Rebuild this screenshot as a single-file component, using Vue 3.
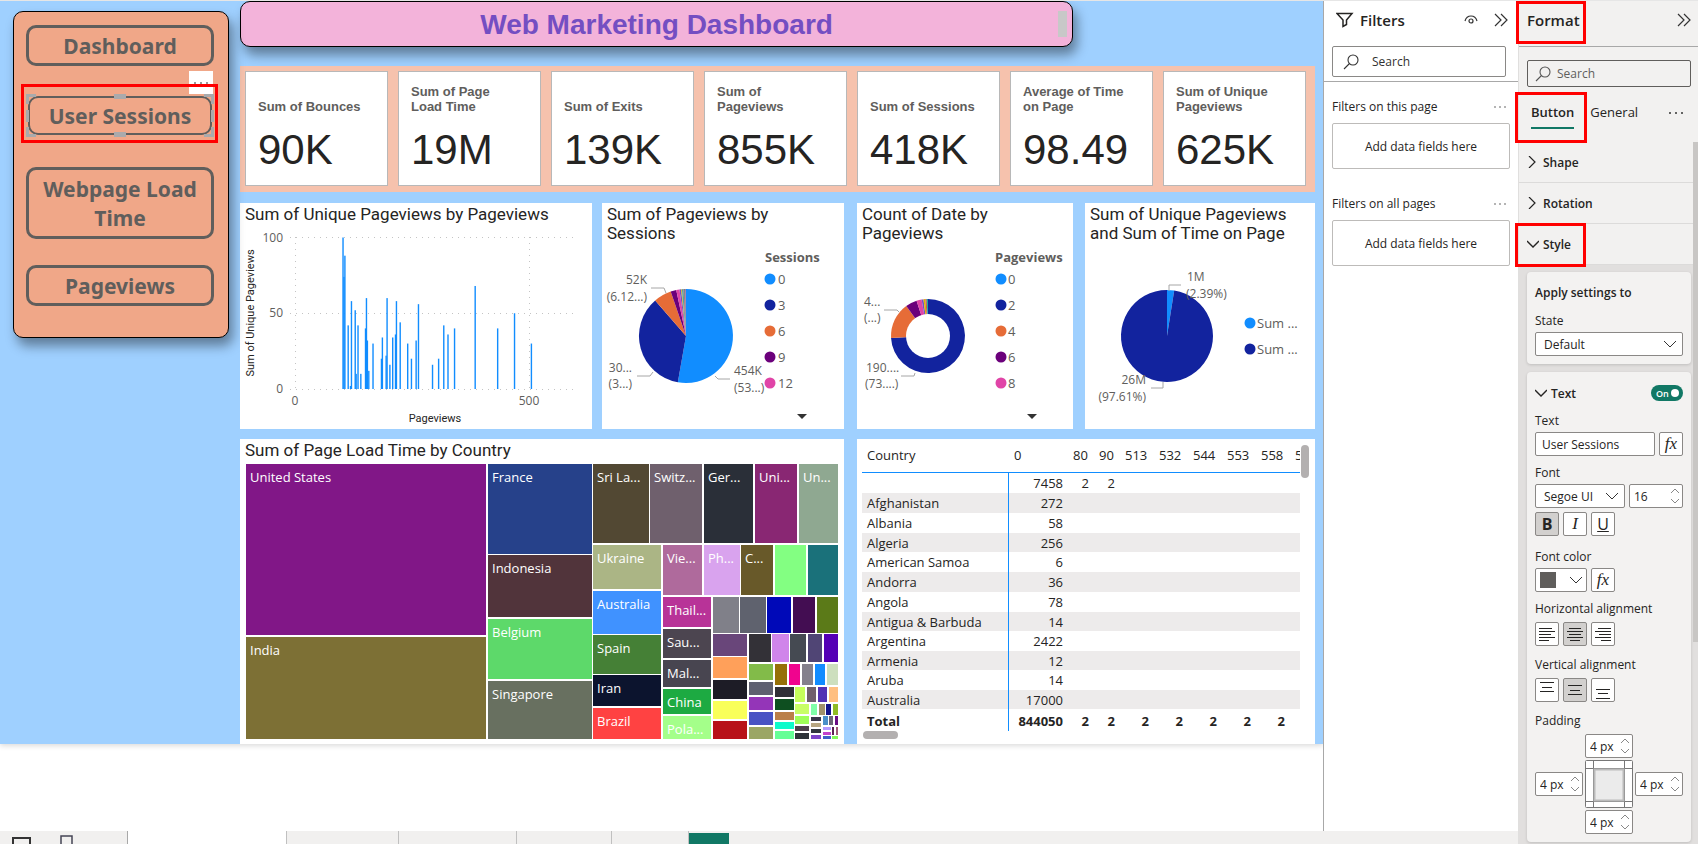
<script setup>
import { ref } from 'vue'

const kpis = [
  { label: 'Sum of Bounces', value: '90K' },
  { label: 'Sum of Page Load Time', value: '19M' },
  { label: 'Sum of Exits', value: '139K' },
  { label: 'Sum of Pageviews', value: '855K' },
  { label: 'Sum of Sessions', value: '418K' },
  { label: 'Average of Time on Page', value: '98.49' },
  { label: 'Sum of Unique Pageviews', value: '625K' },
]

// [pageviews, unique pageviews]
const bars = [
  [101, 100], [103, 74], [105, 88], [112, 42], [117, 2], [119, 58], [127, 52], [129, 10], [133, 42],
  [139, 10], [149, 40], [151, 60], [153, 32], [156, 12], [165, 30], [183, 20], [185, 34], [193, 22],
  [195, 60], [201, 16], [207, 34], [213, 36], [215, 58], [223, 44], [239, 30], [247, 20], [257, 32],
  [262, 56], [292, 16], [305, 20], [316, 42], [325, 36], [339, 40], [383, 68], [431, 40], [467, 50],
  [503, 30],
]
const barX = (v) => 55 + v * 0.4686
const barH = (v) => v * 1.515

function slice(cx, cy, r, from, to) {
  const point = (deg) => {
    const a = ((deg - 90) * Math.PI) / 180
    return `${(cx + r * Math.cos(a)).toFixed(2)} ${(cy + r * Math.sin(a)).toFixed(2)}`
  }
  return `M${cx} ${cy} L${point(from)} A${r} ${r} 0 ${to - from > 180 ? 1 : 0} 1 ${point(to)} Z`
}

const sessionSlices = [
  [0, 190, '#118dff'], [190, 319, '#12239e'], [319, 341, '#e66c37'], [341, 348, '#6b007b'],
  [348, 352, '#e044a7'], [352, 354, '#744ec2'], [354, 355, '#d9b300'], [355, 357, '#4aa3a3'],
  [357, 358, '#d64550'], [358, 359, '#197278'], [359, 360, '#a66999'],
].map(([a, b, color]) => ({ d: slice(84, 92, 47, a, b), color }))

const dateSlices = [
  [0, 267, '#12239e'], [267, 324, '#e66c37'], [324, 342, '#6b007b'], [342, 350, '#e044a7'],
  [350, 353, '#744ec2'], [353, 356, '#d9b300'], [356, 358, '#d64550'], [358, 360, '#1aab9f'],
].map(([a, b, color]) => ({ d: slice(71, 92, 37, a, b), color }))

const timeSlices = [
  [0, 9, '#118dff'], [9, 360, '#12239e'],
].map(([a, b, color]) => ({ d: slice(82, 92, 46, a, b), color }))

const palette = ['#118dff', '#12239e', '#e66c37', '#6b007b', '#e044a7']
const sessionLegend = ['0', '3', '6', '9', '12']
const dateLegend = ['0', '2', '4', '6', '8']

// [left, top, right, bottom, fill, label]
const tiles = [
  [6, 1, 246, 172, '#811787', 'United States'],
  [6, 174, 246, 276, '#7d7035', 'India'],
  [248, 1, 352, 91, '#26418a', 'France'],
  [248, 92, 352, 154, '#51343b', 'Indonesia'],
  [248, 156, 352, 216, '#5dd96a', 'Belgium'],
  [248, 218, 352, 276, '#687060', 'Singapore'],
  [353, 1, 409, 80, '#524833', 'Sri La...'],
  [410, 1, 462, 80, '#6f606d', 'Switz...'],
  [464, 1, 513, 80, '#2a2f38', 'Ger...'],
  [515, 1, 557, 80, '#892773', 'Uni...'],
  [559, 1, 598, 80, '#8fa891', 'Un...'],
  [353, 82, 421, 126, '#abb585', 'Ukraine'],
  [353, 128, 421, 171, '#4092ff', 'Australia'],
  [353, 172, 421, 211, '#458036', 'Spain'],
  [353, 212, 421, 243, '#0c142e', 'Iran'],
  [353, 245, 421, 276, '#ff4242', 'Brazil'],
  [423, 82, 462, 132, '#af6a9c', 'Vie...'],
  [464, 82, 500, 132, '#d9a3ee', 'Ph...'],
  [501, 82, 533, 132, '#685929', 'C...'],
  [535, 82, 566, 132, '#83ff82'],
  [568, 82, 598, 132, '#1a717a'],
  [423, 134, 471, 164, '#b83398', 'Thail...'],
  [423, 166, 471, 195, '#4c4550', 'Sau...'],
  [423, 197, 471, 224, '#484550', 'Mal...'],
  [423, 226, 471, 251, '#1daa42', 'China'],
  [423, 253, 471, 276, '#a4ff8a', 'Pola...'],
  [473, 134, 499, 170, '#808089'],
  [500, 134, 526, 170, '#5f626e'],
  [527, 134, 551, 170, '#0009b8'],
  [553, 134, 575, 170, '#430d52'],
  [577, 134, 598, 170, '#5b7a18'],
  [473, 171, 507, 193, '#69467a'],
  [473, 194, 507, 215, '#ffa05a'],
  [473, 217, 507, 236, '#1d1c26'],
  [473, 238, 507, 256, '#f9ff5a'],
  [473, 258, 507, 276, '#b81219'],
  [509, 171, 531, 199, '#333137'],
  [532, 171, 549, 199, '#d085ea'],
  [550, 171, 566, 199, '#454a52'],
  [568, 171, 582, 199, '#504575'],
  [584, 171, 598, 199, '#5400b5'],
  [509, 201, 533, 217, '#82bb49'],
  [509, 219, 533, 232, '#5f6070'],
  [509, 234, 533, 247, '#9435b8'],
  [509, 249, 533, 262, '#4853c4'],
  [509, 264, 533, 276, '#9ba665'],
  [535, 201, 547, 222, '#967008'],
  [549, 201, 560, 222, '#f0048e'],
  [562, 201, 573, 222, '#84808c'],
  [575, 201, 585, 222, '#128cff'],
  [587, 201, 598, 222, '#cddfbe'],
  [535, 224, 554, 234, '#302f37'],
  [535, 236, 554, 247, '#0e4f20'],
  [535, 249, 554, 257, '#bb7f48'],
  [535, 259, 554, 266, '#0dfbcb'],
  [535, 268, 554, 276, '#66ff96'],
  [555, 224, 565, 239, '#c6ff5c'],
  [567, 224, 576, 239, '#70606c'],
  [578, 224, 587, 239, '#5231b4'],
  [589, 224, 598, 239, '#ffbf80'],
  [555, 241, 569, 251, '#c8ff66'],
  [555, 253, 569, 261, '#9fff58'],
  [555, 263, 569, 268, '#4d414c'],
  [555, 270, 569, 276, '#2d3238'],
  [571, 241, 577, 252, '#80ffa8'],
  [579, 241, 585, 252, '#a1916a'],
  [586, 241, 591, 252, '#14148b'],
  [593, 241, 598, 252, '#90bb24'],
  [571, 254, 581, 258, '#383748'],
  [571, 260, 581, 264, '#b8a782'],
  [571, 266, 581, 270, '#31373f'],
  [571, 272, 581, 276, '#7c44c8'],
  [583, 253, 588, 262, '#4a8fc8'],
  [589, 253, 593, 262, '#6c6478'],
  [595, 253, 598, 262, '#6a0c84'],
  [583, 264, 591, 267, '#b49aff'],
  [583, 269, 591, 272, '#c442cc'],
  [583, 273, 591, 276, '#4060c8'],
  [592, 264, 594, 272, '#5b2056'],
  [596, 264, 598, 272, '#a05878'],
  [592, 273, 598, 276, '#82f85a'],
]

const columns = ['0', '80', '90', '513', '532', '544', '553', '558', '5']
const rows = [
  ['', '7458', '2', '2'],
  ['Afghanistan', '272'],
  ['Albania', '58'],
  ['Algeria', '256'],
  ['American Samoa', '6'],
  ['Andorra', '36'],
  ['Angola', '78'],
  ['Antigua & Barbuda', '14'],
  ['Argentina', '2422'],
  ['Armenia', '12'],
  ['Aruba', '14'],
  ['Australia', '17000'],
]
const totals = ['844050', '2', '2', '2', '2', '2', '2', '2', '']

const filterSearch = ref('')
const formatSearch = ref('')
const buttonText = ref('User Sessions')
const textOn = ref(true)
const fontSize = ref('16')
const padding = ref({ top: '4 px', left: '4 px', right: '4 px', bottom: '4 px' })
</script>

<template>
  <div class="app">
    <main class="workspace">
      <section class="report">
        <nav class="nav">
          <button type="button" class="nav-btn">Dashboard</button>
          <div class="selected">
            <button type="button" class="nav-btn thin">User Sessions</button>
            <i class="handle tl"></i><i class="handle tr"></i><i class="handle bl"></i><i class="handle br"></i>
            <i class="grip top"></i><i class="grip bottom"></i><i class="grip left"></i><i class="grip right"></i>
            <button type="button" class="more" aria-label="More options">
              <svg width="16" height="4" viewBox="0 0 16 4" fill="#777"><circle cx="2" cy="2" r="1" /><circle cx="8" cy="2" r="1" /><circle cx="14" cy="2" r="1" /></svg>
            </button>
            <i class="mark"></i>
          </div>
          <button type="button" class="nav-btn tall">Webpage Load Time</button>
          <button type="button" class="nav-btn last">Pageviews</button>
        </nav>

        <div class="content">
          <header class="banner">
            <h1>Web Marketing Dashboard</h1>
            <i class="banner-thumb"></i>
          </header>

          <ul class="kpis">
            <li v-for="k in kpis" :key="k.label" class="kpi">
              <span class="kpi-label">{{ k.label }}</span>
              <span class="kpi-value">{{ k.value }}</span>
            </li>
          </ul>

          <div class="visuals">
            <div class="pair left">
              <article class="card">
                <h2 class="roomy">Sum of Unique Pageviews by Pageviews</h2>
                <svg class="chart" viewBox="0 0 352 200">
                  <g stroke="#c4c4c4" stroke-dasharray="1 5" fill="none">
                    <path d="M50 8.5H334M50 84.5H334M50 160.5H334M55.5 8V160M289.5 8V160" />
                  </g>
                  <rect v-for="(b, i) in bars" :key="i" :x="barX(b[0])" :y="160 - barH(b[1])" width="1.4" :height="barH(b[1])" fill="#118dff" />
                  <g class="axis">
                    <text x="43" y="13" text-anchor="end">100</text>
                    <text x="43" y="88" text-anchor="end">50</text>
                    <text x="43" y="164" text-anchor="end">0</text>
                    <text x="55" y="176" text-anchor="middle">0</text>
                    <text x="289" y="176" text-anchor="middle">500</text>
                  </g>
                  <text class="axis-title" x="195" y="193" text-anchor="middle">Pageviews</text>
                  <text class="axis-title" transform="translate(14 84) rotate(-90)" text-anchor="middle">Sum of Unique Pageviews</text>
                </svg>
              </article>

              <article class="card">
                <h2>Sum of Pageviews by Sessions</h2>
                <svg class="chart" viewBox="0 0 242 185">
                  <path v-for="(s, i) in sessionSlices" :key="i" :d="s.d" :fill="s.color" />
                  <path class="leader" d="M49 44H62L64 49M35 132H48L51 128M113 132L116 135H128" />
                  <g class="detail">
                    <text x="45" y="40" text-anchor="end">52K</text>
                    <text x="45" y="57" text-anchor="end">(6.12...)</text>
                    <text x="30" y="128" text-anchor="end">30...</text>
                    <text x="30" y="144" text-anchor="end">(3...)</text>
                    <text x="132" y="131">454K</text>
                    <text x="132" y="148">(53...)</text>
                  </g>
                  <text class="legend-title" x="163" y="18">Sessions</text>
                  <g v-for="(l, i) in sessionLegend" :key="l">
                    <circle cx="168" :cy="35 + i * 26" r="5.5" :fill="palette[i]" />
                    <text class="legend" x="176" :y="40 + i * 26">{{ l }}</text>
                  </g>
                  <path d="M195 170H205L200 175Z" fill="#333" />
                </svg>
              </article>
            </div>

            <div class="pair right">
              <article class="card">
                <h2>Count of Date by Pageviews</h2>
                <svg class="chart" viewBox="0 0 216 185">
                  <path v-for="(s, i) in dateSlices" :key="i" :d="s.d" :fill="s.color" />
                  <circle cx="71" cy="92" r="22" fill="#fff" />
                  <path class="leader" d="M27 66H40L42 68M44 132H57L58 129" />
                  <g class="detail">
                    <text x="7" y="62">4...</text>
                    <text x="7" y="78">(...)</text>
                    <text x="9" y="128">190....</text>
                    <text x="8" y="144">(73....)</text>
                  </g>
                  <text class="legend-title" x="138" y="18">Pageviews</text>
                  <g v-for="(l, i) in dateLegend" :key="l">
                    <circle cx="144" :cy="35 + i * 26" r="5.5" :fill="palette[i]" />
                    <text class="legend" x="151" :y="40 + i * 26">{{ l }}</text>
                  </g>
                  <path d="M170 170H180L175 175Z" fill="#333" />
                </svg>
              </article>

              <article class="card">
                <h2>Sum of Unique Pageviews and Sum of Time on Page</h2>
                <svg class="chart" viewBox="0 0 230 185">
                  <path v-for="(s, i) in timeSlices" :key="i" :d="s.d" :fill="s.color" />
                  <path class="leader" d="M84 47V41H96M66 144H78V138" />
                  <g class="detail">
                    <text x="102" y="37">1M</text>
                    <text x="101" y="54">(2.39%)</text>
                    <text x="61" y="140" text-anchor="end">26M</text>
                    <text x="61" y="157" text-anchor="end">(97.61%)</text>
                  </g>
                  <circle cx="165" cy="79" r="5.5" fill="#118dff" />
                  <text class="legend" x="172" y="84">Sum ...</text>
                  <circle cx="165" cy="105" r="5.5" fill="#12239e" />
                  <text class="legend" x="172" y="110">Sum ...</text>
                </svg>
              </article>
            </div>

            <article class="card">
              <h2>Sum of Page Load Time by Country</h2>
              <svg class="chart" viewBox="0 0 604 281">
                <g v-for="(t, i) in tiles" :key="i">
                  <rect :x="t[0]" :y="t[1]" :width="t[2] - t[0]" :height="t[3] - t[1]" :fill="t[4]" />
                  <text v-if="t[5]" class="tile" :x="t[0] + 4" :y="t[1] + 18">{{ t[5] }}</text>
                </g>
              </svg>
            </article>

            <article class="card matrix">
              <div class="matrix-view">
                <table>
                  <colgroup>
                    <col class="c-name" /><col class="c-first" /><col class="c-small" /><col class="c-small" />
                    <col v-for="n in 6" :key="n" class="c-mid" />
                  </colgroup>
                  <thead>
                    <tr><th>Country</th><th v-for="c in columns" :key="c">{{ c }}</th></tr>
                  </thead>
                  <tbody>
                    <tr v-for="r in rows" :key="r[0]">
                      <td v-for="(c, i) in 10" :key="i">{{ r[i] }}</td>
                    </tr>
                  </tbody>
                  <tfoot>
                    <tr><td>Total</td><td v-for="(t, i) in totals" :key="i">{{ t }}</td></tr>
                  </tfoot>
                </table>
              </div>
              <i class="thumb-v"></i>
              <i class="thumb-h"></i>
            </article>
          </div>
        </div>
      </section>

      <footer class="pages">
        <div class="devices">
          <button type="button" aria-label="Desktop layout"><svg width="20" height="12" viewBox="0 0 20 12" fill="none" stroke="#333" stroke-width="2"><path d="M1 12V4H18V12" /></svg></button>
          <button type="button" aria-label="Mobile layout"><svg width="13" height="14" viewBox="0 0 13 14" fill="none" stroke="#445" stroke-width="1.5"><path d="M1 14V2H12V14" /></svg></button>
        </div>
        <div class="tab t1 current"></div>
        <div class="tab t2"></div>
        <div class="tab t3"></div>
        <div class="tab t4"></div>
        <div class="tab t5"></div>
        <button type="button" class="add" aria-label="New page"></button>
      </footer>
    </main>

    <aside class="filters">
      <header class="filters-head">
        <svg width="18" height="16" viewBox="0 0 18 16" fill="none" stroke="#252423" stroke-width="1.5"><path d="M1 1.5H16L10.5 8V12.5L7 14.5V8Z" /></svg>
        <h3>Filters</h3>
        <svg class="eye" width="14" height="10" viewBox="0 0 14 10" fill="none" stroke="#333" stroke-width="1.2"><path d="M1 6C2 2.500 4.500 1 7 1S12 2.500 13 6" /><circle cx="7" cy="6" r="2" /></svg>
        <svg width="14" height="14" viewBox="0 0 14 14" fill="none" stroke="#333" stroke-width="1.2"><path d="M1 1L7 7L1 13M7 1L13 7L7 13" /></svg>
      </header>
      <div class="filters-search">
        <label class="search">
          <svg width="16" height="16" viewBox="0 0 16 16" fill="none" stroke="#333" stroke-width="1.100"><circle cx="10" cy="6" r="5" /><path d="M6.500 9.500L1 15" /></svg>
          <input v-model="filterSearch" type="text" placeholder="Search" aria-label="Search filters" />
        </label>
      </div>
      <section class="filter-group">
        <div class="filter-title"><span>Filters on this page</span><svg width="12" height="4" viewBox="0 0 12 4" fill="#555"><circle cx="1" cy="2" r="0.800" /><circle cx="6" cy="2" r="0.800" /><circle cx="11" cy="2" r="0.800" /></svg></div>
        <div class="drop">Add data fields here</div>
      </section>
      <section class="filter-group">
        <div class="filter-title"><span>Filters on all pages</span><svg width="12" height="4" viewBox="0 0 12 4" fill="#555"><circle cx="1" cy="2" r="0.800" /><circle cx="6" cy="2" r="0.800" /><circle cx="11" cy="2" r="0.800" /></svg></div>
        <div class="drop">Add data fields here</div>
      </section>
    </aside>

    <aside class="format">
      <header class="format-head">
        <h3>Format</h3>
        <i class="mark"></i>
        <svg width="14" height="14" viewBox="0 0 14 14" fill="none" stroke="#333" stroke-width="1.2"><path d="M1 1L7 7L1 13M7 1L13 7L7 13" /></svg>
      </header>
      <label class="search">
        <svg width="16" height="16" viewBox="0 0 16 16" fill="none" stroke="#555" stroke-width="1.100"><circle cx="10" cy="6" r="5" /><path d="M6.500 9.500L1 15" /></svg>
        <input v-model="formatSearch" type="text" placeholder="Search" aria-label="Search format settings" />
      </label>
      <div class="tabs">
        <button type="button" class="active">Button</button>
        <button type="button">General</button>
        <svg width="16" height="4" viewBox="0 0 16 4" fill="#333"><circle cx="2" cy="2" r="1" /><circle cx="8" cy="2" r="1" /><circle cx="14" cy="2" r="1" /></svg>
        <i class="mark"></i>
      </div>
      <button type="button" class="group"><svg width="12" height="12" viewBox="0 0 12 12" fill="none" stroke="#252423" stroke-width="1.2"><path d="M2 0L8 6L2 12" /></svg>Shape</button>
      <button type="button" class="group"><svg width="12" height="12" viewBox="0 0 12 12" fill="none" stroke="#252423" stroke-width="1.2"><path d="M2 0L8 6L2 12" /></svg>Rotation</button>
      <button type="button" class="group open"><svg width="12" height="12" viewBox="0 0 12 12" fill="none" stroke="#252423" stroke-width="1.4"><path d="M0 3L6 9L12 3" /></svg>Style<i class="mark"></i></button>

      <div class="settings">
        <section class="panel">
          <h4>Apply settings to</h4>
          <label for="state">State</label>
          <div class="select">
            <select id="state"><option>Default</option></select>
            <svg width="12" height="8" viewBox="0 0 12 8" fill="none" stroke="#333"><path d="M0 1L6 7L12 1" /></svg>
          </div>
        </section>

        <section class="panel text-panel">
          <div class="panel-head">
            <svg width="12" height="12" viewBox="0 0 12 12" fill="none" stroke="#252423" stroke-width="1.4"><path d="M0 3L6 9L12 3" /></svg>
            <span>Text</span>
            <label class="toggle"><input v-model="textOn" type="checkbox" aria-label="Text" /><span>On</span><i></i></label>
          </div>
          <label for="btn-text">Text</label>
          <div class="row">
            <input id="btn-text" v-model="buttonText" class="box grow" type="text" />
            <button type="button" class="tool fx">fx</button>
          </div>
          <label for="font">Font</label>
          <div class="row">
            <div class="select grow">
              <select id="font"><option>Segoe UI</option></select>
              <svg width="12" height="8" viewBox="0 0 12 8" fill="none" stroke="#333"><path d="M0 1L6 7L12 1" /></svg>
            </div>
            <div class="spin wide">
              <input v-model="fontSize" type="text" aria-label="Font size" />
              <svg width="10" height="16" viewBox="0 0 10 16" fill="none" stroke="#888"><path d="M1 5L5 1L9 5M1 11L5 15L9 11" /></svg>
            </div>
          </div>
          <div class="row tools">
            <button type="button" class="tool on bold">B</button>
            <button type="button" class="tool italic">I</button>
            <button type="button" class="tool under">U</button>
          </div>
          <span class="caption">Font color</span>
          <div class="row">
            <button type="button" class="swatch" aria-label="Font color"><i></i><svg width="12" height="8" viewBox="0 0 12 8" fill="none" stroke="#333"><path d="M0 1L6 7L12 1" /></svg></button>
            <button type="button" class="tool fx">fx</button>
          </div>
          <span class="caption">Horizontal alignment</span>
          <div class="row low">
            <button type="button" class="tool" aria-label="Left"><svg width="18" height="14" viewBox="0 0 18 14" stroke="#252423"><path d="M1 1.500H14M1 4.500H17M1 7.500H13M1 10.500H17M1 13.500H11" /></svg></button>
            <button type="button" class="tool on" aria-label="Center"><svg width="18" height="14" viewBox="0 0 18 14" stroke="#252423"><path d="M3 1.500H15M1 4.500H17M3 7.500H15M1 10.500H17M4 13.500H14" /></svg></button>
            <button type="button" class="tool" aria-label="Right"><svg width="18" height="14" viewBox="0 0 18 14" stroke="#252423"><path d="M4 1.500H17M1 4.500H17M5 7.500H17M1 10.500H17M7 13.500H17" /></svg></button>
          </div>
          <span class="caption far">Vertical alignment</span>
          <div class="row low">
            <button type="button" class="tool" aria-label="Top"><svg width="18" height="20" viewBox="0 0 18 20" stroke="#252423"><path d="M2 2.500H16M4 7.500H14M2 11.500H16" /></svg></button>
            <button type="button" class="tool on" aria-label="Middle"><svg width="18" height="20" viewBox="0 0 18 20" stroke="#252423"><path d="M2 5.500H16M4 10.500H14M2 14.500H16" /></svg></button>
            <button type="button" class="tool" aria-label="Bottom"><svg width="18" height="20" viewBox="0 0 18 20" stroke="#252423"><path d="M2 9.500H16M4 13.500H14M2 18.500H16" /></svg></button>
          </div>
          <span class="caption far">Padding</span>
          <div class="pads">
            <div v-for="side in ['top', 'left', 'right', 'bottom']" :key="side" class="spin" :class="side">
              <input v-model="padding[side]" type="text" :aria-label="'Padding ' + side" />
              <svg width="10" height="16" viewBox="0 0 10 16" fill="none" stroke="#888"><path d="M1 5L5 1L9 5M1 11L5 15L9 11" /></svg>
            </div>
            <svg class="frame" viewBox="0 0 48 48" fill="#fff" stroke="#777"><rect x="0.5" y="0.5" width="47" height="47" rx="1" /><path d="M8.500 0V48M39.500 0V48M0 8.500H48M0 41.500H48" /><rect x="9.500" y="9.500" width="29" height="31" fill="#ebebeb" stroke="#bbb" stroke-width="2" /></svg>
          </div>
        </section>
      </div>
      <i class="scroll"></i>
    </aside>
  </div>
</template>

<style>
body {
  margin: 0;
  background: #fff;
}
</style>

<style scoped>
* {
  box-sizing: border-box;
}
.app {
  display: grid;
  grid-template-columns: minmax(0, 1fr) 195px 180px;
  height: 100vh;
  overflow: hidden;
  border-top: 1px solid #e6e6e6;
  font-family: 'Open Sans', 'Noto Sans', sans-serif;
  font-size: 12px;
  color: #252423;
}
button,
input,
select {
  font: inherit;
  color: inherit;
  margin: 0;
  padding: 0;
  border: 0;
  background: none;
  border-radius: 0;
}
h1,
h2,
h3,
h4,
ul {
  margin: 0;
  padding: 0;
}
svg {
  display: block;
  flex: none;
}
.mark {
  position: absolute;
  border: 3px solid #f00;
  pointer-events: none;
}
.workspace {
  display: flex;
  flex-direction: column;
  min-width: 0;
}
.report {
  display: flex;
  align-items: flex-start;
  gap: 11px;
  padding: 0 8px 0 13px;
  background: #9fd0ff;
  box-shadow: 0 2px 5px #ddd;
}
.nav {
  position: relative;
  z-index: 1;
  display: flex;
  flex-direction: column;
  flex: none;
  width: 216px;
  margin-top: 10px;
  padding: 13px 14px 31px 12px;
  border: 1px solid #000;
  border-radius: 10px;
  background: #f0a788;
  box-shadow: 4px 8px 12px rgba(0, 0, 0, 0.4);
}
.nav-btn {
  height: 41px;
  padding-top: 2px;
  border: 3px solid #605e5c;
  border-radius: 10px;
  color: #605e5c;
  font-size: 21px;
  font-weight: 700;
  line-height: 29px;
  font-family: 'Noto Sans', 'Open Sans', sans-serif;
}
.nav-btn.thin {
  width: 100%;
  height: 100%;
  border-width: 2px;
}
.nav-btn.tall {
  height: 72px;
}
.nav-btn.last {
  margin-top: 26px;
}
.selected {
  position: relative;
  height: 43px;
  margin: 28px 0 30px;
  padding: 2px;
}
.handle {
  position: absolute;
  width: 10px;
  height: 10px;
  border: 0 solid #a9aaac;
}
.tl {
  top: 0;
  left: 0;
  border-width: 3px 0 0 3px;
}
.tr {
  top: 0;
  right: 0;
  border-width: 3px 3px 0 0;
}
.bl {
  bottom: 0;
  left: 0;
  border-width: 0 0 3px 3px;
}
.br {
  bottom: 0;
  right: 0;
  border-width: 0 3px 3px 0;
}
.grip {
  position: absolute;
  background: #a9aaac;
}
.grip.top,
.grip.bottom {
  left: 50%;
  width: 12px;
  height: 5px;
  margin-left: -6px;
}
.grip.top {
  top: 0;
}
.grip.bottom {
  bottom: 0;
}
.grip.left,
.grip.right {
  top: 50%;
  width: 3px;
  height: 12px;
  margin-top: -6px;
}
.grip.left {
  left: 0;
}
.grip.right {
  right: 0;
}
.more {
  position: absolute;
  right: 1px;
  bottom: 100%;
  display: grid;
  place-items: center;
  width: 24px;
  height: 23px;
  background: #fff;
}
.selected .mark {
  inset: -10px -4px -6px -5px;
}
.content {
  flex: 1;
  min-width: 0;
}
.banner {
  position: relative;
  display: grid;
  place-items: center;
  width: 77.500%;
  height: 46px;
  border: 1px solid #000;
  border-radius: 10px;
  background: #f3b3da;
  box-shadow: 4px 8px 12px rgba(0, 0, 0, 0.4);
}
.banner h1 {
  padding-top: 2px;
  font: 700 28px/42px 'Liberation Sans', sans-serif;
  color: #744ec2;
}
.banner-thumb {
  position: absolute;
  top: 9px;
  right: 5px;
  width: 9px;
  height: 26px;
  background: #c8c8c8;
}
.kpis {
  position: relative;
  display: grid;
  grid-template-columns: repeat(7, 1fr);
  gap: 10px;
  margin-top: 19px;
  padding: 5px 9px 6px 5px;
  background: #f6c2ad;
  list-style: none;
  font-family: 'Liberation Sans', sans-serif;
}
.kpi {
  display: flex;
  flex-direction: column;
  justify-content: flex-end;
  height: 115px;
  padding: 0 16px 11px 12px;
  border: 1px solid #b8b8b8;
  background: #fff;
}
.kpi-label {
  color: #605e5c;
  font-size: 13px;
  font-weight: 700;
  line-height: 15px;
}
.kpi-value {
  margin-top: 12px;
  font-size: 42px;
  line-height: 48px;
}
.visuals {
  display: grid;
  grid-template-columns: 604fr 458fr;
  gap: 10px 13px;
  margin-top: 11px;
}
.pair {
  display: grid;
}
.pair.left {
  grid-template-columns: 352fr 242fr;
  gap: 10px;
}
.pair.right {
  grid-template-columns: 216fr 230fr;
  gap: 12px;
}
.card {
  position: relative;
  min-width: 0;
  background: #fff;
}
.card h2 {
  padding: 2px 4px 1px 5px;
  font: 400 17px/19px Roboto, sans-serif;
  min-height: 24px;
}
.card h2.roomy {
  min-height: 26px;
}
.chart {
  width: 100%;
  height: auto;
}
.axis {
  font-size: 12px;
  fill: #605e5c;
}
.axis-title {
  font: 11px Roboto, sans-serif;
  fill: #252423;
}
.detail {
  font-size: 12px;
  fill: #605e5c;
}
.leader {
  fill: none;
  stroke: #a6a6a6;
}
.legend-title {
  font-size: 13px;
  font-weight: 700;
  fill: #605e5c;
}
.legend {
  font-size: 13px;
  fill: #605e5c;
}
.tile {
  font-size: 13px;
  fill: #fff;
}
.matrix-view {
  margin: 0 15px 0 5px;
  overflow: hidden;
}
table {
  width: 437px;
  table-layout: fixed;
  border-collapse: separate;
  border-spacing: 0;
  font-size: 13px;
  line-height: 16px;
}
.c-name {
  width: 147px;
}
.c-first {
  width: 59px;
}
.c-small {
  width: 26px;
}
.c-mid {
  width: 34px;
}
th,
td {
  height: 19px;
  padding: 0 5px;
  text-align: right;
  white-space: nowrap;
}
th {
  height: 34px;
  padding-bottom: 2px;
  font-weight: 400;
  text-align: left;
  border-bottom: 1px solid #118dff;
}
td:first-child {
  text-align: left;
  border-right: 1px solid #118dff;
}
tbody tr:nth-child(odd) td,
tbody tr:nth-child(2) td,
tbody tr:nth-child(6) td {
  height: 20px;
}
tbody tr:nth-child(even) td {
  background: #edebeb;
}
tfoot td {
  height: 22px;
  padding-top: 2px;
  font-weight: 700;
}
.thumb-v {
  position: absolute;
  top: 6px;
  right: 6px;
  width: 8px;
  height: 33px;
  border-radius: 4px;
  background: #b3b0b0;
}
.thumb-h {
  position: absolute;
  bottom: 5px;
  left: 6px;
  width: 35px;
  height: 8px;
  border-radius: 4px;
  background: #b3b0b0;
}
.pages {
  display: flex;
  height: 13px;
  margin-top: auto;
  margin-right: -195px;
  overflow: hidden;
  background: #f1f0ef;
  position: relative;
  z-index: 1;
}
.devices {
  display: flex;
  align-items: flex-start;
  gap: 28px;
  width: 128px;
  padding: 3px 0 0 12px;
  border-right: 1px solid #a8a8a8;
}
.tab {
  border-right: 1px solid #c0c0c0;
}
.tab.current {
  background: #fff;
}
.t1 {
  width: 159px;
}
.t2 {
  width: 112px;
}
.t3 {
  width: 118px;
}
.t4 {
  width: 95px;
}
.t5 {
  width: 77px;
}
.add {
  width: 40px;
  margin-top: 2px;
  background: #117865;
}
.filters {
  border-left: 1px solid #a8a8a8;
  background: #fff;
}
.filters-head {
  display: flex;
  align-items: center;
  height: 45px;
  padding: 0 10px 8px 12px;
}
h3 {
  font-size: 15px;
  font-weight: 600;
}
.filters-head h3 {
  margin-left: 6px;
}
.eye {
  margin: 0 16px 0 auto;
}
.search {
  display: flex;
  align-items: center;
  border: 1px solid #8a8886;
  border-radius: 2px;
}
.search input {
  flex: 1;
  min-width: 0;
  outline: 0;
}
.search input::placeholder {
  color: #323130;
  opacity: 1;
}
.filters-search {
  padding: 0 12px 4px 8px;
  border-bottom: 1px solid #a8a8a8;
}
.filters-search .search {
  height: 31px;
  gap: 13px;
  padding: 0 10px;
}
.filter-group {
  padding: 17px 8px 0;
}
.filter-group + .filter-group {
  padding-top: 27px;
}
.filter-title {
  display: flex;
  align-items: center;
  justify-content: space-between;
  padding-right: 4px;
  line-height: 16px;
}
.drop {
  display: grid;
  place-items: center;
  height: 46px;
  margin-top: 8px;
  border: 1px solid #bdbbb9;
  border-radius: 2px;
}
.format {
  position: relative;
  display: flex;
  flex-direction: column;
  background: #f2f1f0;
  border-left: 1px solid #e0dfde;
  z-index: 2;
}
.format-head {
  position: relative;
  display: flex;
  align-items: center;
  justify-content: space-between;
  height: 46px;
  padding: 0 7px 8px 8px;
  border-bottom: 1px solid #a8a8a8;
}
.format-head .mark {
  inset: 0 auto 2px -3px;
  width: 70px;
}
.format > .search {
  height: 27px;
  margin: 13px 7px 0 8px;
  padding-left: 7px;
  gap: 6px;
  flex: none;
  border-color: #605e5c;
}
.format > .search input::placeholder {
  color: #605e5c;
}
.tabs {
  position: relative;
  display: flex;
  align-items: center;
  height: 55px;
  padding: 0 14px 4px 12px;
}
.tabs button {
  height: 32px;
  font-size: 13px;
  margin-right: 16px;
  border-bottom: 2px solid transparent;
}
.tabs button.active {
  font-weight: 600;
  border-bottom-color: #117865;
}
.tabs svg {
  margin-left: auto;
}
.tabs .mark {
  inset: 5px auto -1px -4px;
  width: 72px;
}
.group {
  position: relative;
  display: flex;
  align-items: center;
  gap: 4px;
  height: 41px;
  padding-left: 8px;
  border-bottom: 1px solid #dcdbda;
  font-weight: 600;
}
.group .mark {
  inset: -1px auto -3px -4px;
  width: 71px;
}
.settings {
  flex: 1;
  padding: 7px 7px 0 8px;
  background: #e1dfde;
}
.panel {
  display: flex;
  flex-direction: column;
  padding: 13px 8px 8px;
  border-radius: 4px;
  background: #f3f2f1;
  box-shadow: 0 1px 3px rgba(0, 0, 0, 0.15);
}
.panel > label,
.caption,
h4 {
  font-size: 12px;
  line-height: 16px;
}
h4 {
  font-weight: 600;
}
.panel > label {
  margin: 9px 0 3px;
}
h4 + label {
  margin-top: 12px !important;
}
.text-panel {
  margin-top: 8px;
}
.panel-head {
  display: flex;
  align-items: center;
  gap: 4px;
  height: 16px;
  margin-bottom: 3px;
  font-weight: 600;
}
.toggle {
  display: flex;
  align-items: center;
  gap: 2px;
  width: 32px;
  height: 16px;
  margin-left: auto;
  padding-left: 5px;
  border-radius: 8px;
  background: #117865;
  color: #fff;
  font-size: 9px;
}
.toggle input {
  position: absolute;
  opacity: 0;
  width: 0;
  height: 0;
}
.toggle i {
  width: 8px;
  height: 8px;
  border-radius: 4px;
  background: #fff;
}
.row {
  display: flex;
  gap: 4px;
}
.grow {
  flex: 1;
  min-width: 0;
}
.box,
.select,
.spin,
.tool,
.swatch {
  height: 24px;
  border: 1px solid #8a8886;
  border-radius: 2px;
  background: #fff;
}
.box {
  padding: 0 6px;
}
.select {
  display: grid;
  align-items: center;
  position: relative;
}
.select select {
  width: 100%;
  height: 22px;
  padding-left: 8px;
  appearance: none;
}
.select svg {
  position: absolute;
  right: 6px;
  pointer-events: none;
}
.spin {
  display: flex;
  align-items: center;
  padding: 0 2px 0 4px;
}
.spin.wide {
  width: 54px;
}
.spin input {
  flex: 1;
  width: 0;
  min-width: 0;
}
.tools {
  margin-top: 4px;
  margin-bottom: 4px;
}
.tool {
  display: grid;
  place-items: center;
  width: 24px;
  font-size: 16px;
  line-height: 20px;
}
.tool.on {
  background: #d2d0ce;
}
.bold {
  font-weight: 700;
}
.italic,
.fx {
  font-family: 'Liberation Serif', serif;
  font-style: italic;
  font-size: 17px;
}
.under {
  text-decoration: underline;
}
.caption {
  margin: 9px 0 3px;
}
.caption.far {
  margin-top: 11px;
}
.low {
  margin-top: 2px;
}
.swatch {
  display: flex;
  align-items: center;
  justify-content: space-between;
  width: 52px;
  padding: 0 4px;
}
.swatch i {
  width: 16px;
  height: 16px;
  background: #605e5c;
}
.pads {
  display: grid;
  grid-template-columns: 1fr 48px 1fr;
  grid-template-rows: 24px 48px 24px;
  grid-template-areas: '. t .' 'l f r' '. b .';
  gap: 2px;
  align-items: center;
  margin-top: 2px;
}
.pads .top {
  grid-area: t;
}
.pads .left {
  grid-area: l;
}
.pads .right {
  grid-area: r;
}
.pads .bottom {
  grid-area: b;
}
.frame {
  grid-area: f;
}
.scroll {
  position: absolute;
  top: 141px;
  right: 0;
  width: 5px;
  height: 500px;
  background: #c8c6c4;
}
</style>
